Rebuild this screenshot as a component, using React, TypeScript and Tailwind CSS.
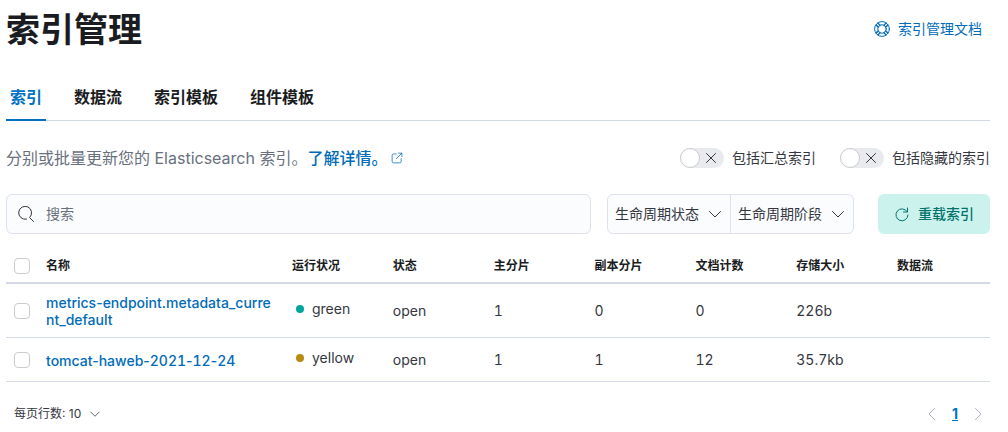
import type { ReactNode } from "react";

interface IndexRow {
  name: string;
  health: "green" | "yellow";
  status: string;
  primary: number;
  replica: number;
  docs: number;
  size: string;
}

const TABS = ["索引", "数据流", "索引模板", "组件模板"];

const COLUMNS = ["运行状况", "状态", "主分片", "副本分片", "文档计数", "存储大小", "数据流"];

const ROWS: IndexRow[] = [
  {
    name: "metrics-endpoint.metadata_current_default",
    health: "green",
    status: "open",
    primary: 1,
    replica: 0,
    docs: 0,
    size: "226b",
  },
  {
    name: "tomcat-haweb-2021-12-24",
    health: "yellow",
    status: "open",
    primary: 1,
    replica: 1,
    docs: 12,
    size: "35.7kb",
  },
];

const HEALTH_COLORS = {
  green: "bg-[#00a69b]",
  yellow: "bg-[#b78b12]",
};

/** 16-unit line icon. */
function Icon({ className = "size-4", children }: { className?: string; children: ReactNode }) {
  return (
    <svg
      viewBox="0 0 16 16"
      fill="none"
      stroke="currentColor"
      strokeLinecap="round"
      strokeLinejoin="round"
      className={`shrink-0 ${className}`}
      aria-hidden="true"
    >
      {children}
    </svg>
  );
}

function ChevronDown({ className }: { className?: string }) {
  return (
    <Icon className={className}>
      <path d="M2.5 5.5 8 11l5.500-5.500" />
    </Icon>
  );
}

function Toggle({ label }: { label: string }) {
  return (
    <label className="flex cursor-pointer items-center gap-2 text-sm">
      <span className="relative flex h-5 w-11 items-center justify-end rounded-full bg-[#e9eaee] pr-[5px]">
        <input type="checkbox" role="switch" className="peer sr-only" />
        <span className="absolute left-0 size-5 rounded-full border border-[#cacbce] bg-white" />
        <Icon>
          <path d="m3.500 3.500 9 9M12.500 3.500l-9 9" />
        </Icon>
      </span>
      {label}
    </label>
  );
}

function Checkbox({ label }: { label: string }) {
  return (
    <input
      type="checkbox"
      aria-label={label}
      className="block size-4 appearance-none rounded border border-[#cacbce] bg-white checked:bg-[#0071c2]"
    />
  );
}

function FilterButton({ label }: { label: string }) {
  return (
    <button type="button" className="flex items-center gap-2 px-[7px]">
      {label}
      <ChevronDown />
    </button>
  );
}

/** Index name with its digits in tabular figures; the hyphens stay narrow. */
function IndexName({ name }: { name: string }) {
  return name.split(/(\d+)/).map((part, i) => (
    <span key={i} className={i % 2 === 1 ? "tabular-nums" : "normal-nums"}>
      {part}
    </span>
  ));
}

function IndexTable() {
  return (
    <table className="w-full table-fixed text-left text-sm">
      <thead className="border-b-2 border-[#d3dae6] text-xs text-[#1a1c21]">
        <tr className="h-[49px]">
          <th className="w-8 pt-4 pl-2">
            <Checkbox label="选择所有行" />
          </th>
          <th className="w-1/4 px-2 pt-4 font-bold">名称</th>
          {COLUMNS.map((column) => (
            <th key={column} className="px-2 pt-4 font-bold">
              {column}
            </th>
          ))}
        </tr>
      </thead>
      <tbody>
        {ROWS.map((row) => (
          <tr key={row.name} className="h-11 border-b border-[#d3dae6] tabular-nums">
            <td className="pl-2">
              <Checkbox label={row.name} />
            </td>
            <td className="px-2 pt-2.5 pb-[9px] leading-[17px] font-medium">
              <a href="#" className="break-all text-[#006bb8]">
                <IndexName name={row.name} />
              </a>
            </td>
            <td className="px-2 pb-1">
              <span className="flex items-center gap-2 pl-1">
                <span className={`size-2 rounded-full ${HEALTH_COLORS[row.health]}`} />
                {row.health}
              </span>
            </td>
            <td className="px-2">{row.status}</td>
            <td className="px-2">{row.primary}</td>
            <td className="px-2">{row.replica}</td>
            <td className="px-2">{row.docs}</td>
            <td className="px-2">{row.size}</td>
            <td className="px-2" />
          </tr>
        ))}
      </tbody>
    </table>
  );
}

export default function App() {
  return (
    <main className="bg-white pr-[18px] pl-1.5 font-['Inter','Noto_Sans_CJK_SC',sans-serif] text-[#343741]">
      <header className="flex items-center justify-between pt-2">
        <h1 className="text-[34px] leading-[44px] font-bold text-[#1a1c21]">索引管理</h1>
        <a href="#" className="flex items-center gap-2 px-2 pb-0.5 text-sm text-[#006bb8]">
          <Icon>
            <circle cx="8" cy="8" r="7.400" />
            <circle cx="8" cy="8" r="4.200" />
            <path
              strokeWidth="1.400"
              d="M10 4.400 11.900 2.100M11.600 6l2.300-1.900M10 11.600l1.900 2.300M11.600 10l2.300 1.900M6 4.400 4.100 2.100M4.400 6 2.100 4.100M6 11.600l-1.900 2.300M4.400 10l-2.300 1.900"
            />
          </Icon>
          索引管理文档
        </a>
      </header>

      <nav className="mt-5 flex gap-6 border-b border-[#d3dae6] text-base font-bold text-[#1a1c21]">
        {TABS.map((tab, i) => (
          <a
            key={tab}
            href="#"
            className={
              i === 0
                ? "-mb-px border-b-2 border-[#0071c2] px-1 pt-[13px] pb-2.5 text-[#0071c2]"
                : "px-1 pt-[13px] pb-2.5"
            }
          >
            {tab}
          </a>
        ))}
      </nav>

      <div className="mt-[25px] flex items-center justify-between">
        <p className="flex items-center text-base text-[#69707d]">
          分别或批量更新您的 Elasticsearch 索引。
          <a href="#" className="flex items-center gap-1 font-medium text-[#006bb8]">
            了解详情。
            <Icon className="size-3">
              <path d="M7 2.500H3.500a2 2 0 0 0-2 2v8a2 2 0 0 0 2 2h8a2 2 0 0 0 2-2V9M10 1.500h4.500V6M14 2 7 9" />
            </Icon>
          </a>
        </p>
        <div className="flex gap-6">
          <Toggle label="包括汇总索引" />
          <Toggle label="包括隐藏的索引" />
        </div>
      </div>

      <div className="mt-6 flex h-10 gap-4 text-sm">
        <label className="flex flex-1 items-center gap-3 rounded-md border border-[#dfe2ee] bg-[#fbfcfd] px-[11px]">
          <Icon>
            <path d="M8.500 13.200a6.500 6.500 0 1 1 3.300-1.800M12 12l3.500 3.500" />
          </Icon>
          <input
            type="search"
            placeholder="搜索"
            aria-label="搜索"
            className="w-full bg-transparent outline-none placeholder:text-[#69707d]"
          />
        </label>
        <div className="flex divide-x divide-[#dfe2ee] rounded-md border border-[#dfe2ee] bg-[#fbfcfd]">
          <FilterButton label="生命周期状态" />
          <FilterButton label="生命周期阶段" />
        </div>
        <button
          type="button"
          className="ml-2 flex items-center gap-2 rounded-md bg-[#ccf2ee] px-4 font-medium text-[#00726b]"
        >
          <Icon>
            <path d="M13.500 2v4h-4M13 5.500A6 6 0 1 0 14 9" />
          </Icon>
          重载索引
        </button>
      </div>

      <IndexTable />

      <footer className="flex items-center justify-between pt-[22px] text-xs">
        <button type="button" className="flex items-center gap-2 px-2">
          每页行数: 10
          <ChevronDown className="size-3" />
        </button>
        <nav className="flex items-center gap-3 pr-1" aria-label="分页">
          <button type="button" disabled aria-label="上一页" className="text-[#abb4c4]">
            <Icon>
              <path d="M10.500 2.500 5 8l5.500 5.500" />
            </Icon>
          </button>
          <a href="#" className="text-sm font-bold text-[#0071c2] underline">
            1
          </a>
          <button type="button" disabled aria-label="下一页" className="text-[#abb4c4]">
            <Icon>
              <path d="M5.500 2.500 11 8l-5.500 5.500" />
            </Icon>
          </button>
        </nav>
      </footer>
    </main>
  );
}
